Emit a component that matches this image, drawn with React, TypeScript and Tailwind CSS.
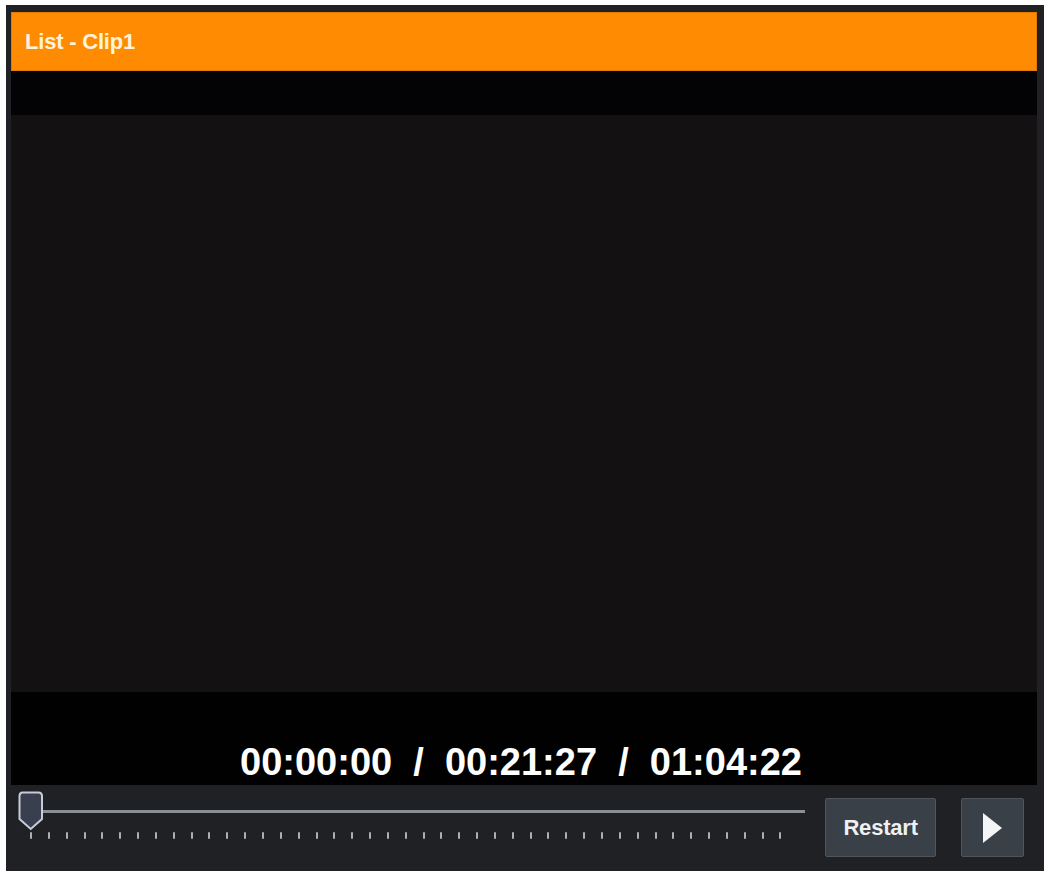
import React from "react";

const font = { fontFamily: '"Liberation Sans", Arial, sans-serif' };

// tick marks under the scrub track
const ticks = Array.from({ length: 43 }, (_, i) => i);

function Thumb() {
  return (
    <svg width="26" height="40" viewBox="0 0 26 40" className="absolute left-0 top-[-7px]">
      <path
        d="M4.5 1.5 H20.5 Q24 1.5 24 5 V28 L12.75 38 L1.5 28 V5 Q1.5 1.5 4.5 1.5 Z"
        fill="#3a3f4f"
        stroke="#c9ccd6"
        strokeWidth="2"
      />
    </svg>
  );
}

export default function App() {
  return (
    <div className="h-[873px] w-[1049px] bg-white pl-[6px] pt-[5px]" style={font}>
      <div className="flex h-[866px] w-[1038px] flex-col bg-[#1f2125]">
        {/* Screen area */}
        <div className="ml-[5px] mr-[7px] mt-[7px] flex flex-col">
          <div className="flex h-[59px] items-center border border-[#e07a00] bg-[#ff8b03] pl-[13px]">
            <span className="text-[22px] font-bold tracking-[-0.2px] text-[#fff3da]">List - Clip1</span>
          </div>
          <div className="h-[44px] bg-[#030305]" />
          <div className="h-[577px] bg-[#141113]" />
          <div className="flex h-[93px] flex-col items-center justify-end bg-[#010101] pb-[4px] pr-[6px]">
            <span className="whitespace-pre text-[38px] font-bold leading-[38px] text-white">
              {"00:00:00  /  00:21:27  /  01:04:22"}
            </span>
          </div>
        </div>

        {/* Controls */}
        <div className="flex flex-1 items-start pl-[12px] pr-[20px] pt-[13px]">
          <div className="relative h-[55px] w-[788px]">
            <div className="absolute left-[24px] right-0 top-[12px] h-[3px] bg-[#8a8f94]" />
            <div className="absolute left-[12px] top-[34px] flex gap-[15.85px]">
              {ticks.map((t) => (
                <div key={t} className="h-[7px] w-[2px] rounded-[1px] bg-[#aab0b5]" />
              ))}
            </div>
            <Thumb />
          </div>
          <button className="ml-[20px] flex h-[59px] w-[111px] items-center justify-center rounded-[2px] border border-[#4f555c] bg-[#3a4047] text-[22px] font-bold tracking-[-0.2px] text-[#eef0f2]">
            Restart
          </button>
          <button className="ml-[25px] flex h-[59px] w-[63px] items-center justify-center rounded-[2px] border border-[#4f555c] bg-[#3a4047]">
            <svg width="19" height="30" viewBox="0 0 19 30">
              <path d="M0 0 L19 15 L0 30 Z" fill="#f4f5f6" />
            </svg>
          </button>
        </div>
      </div>
    </div>
  );
}
